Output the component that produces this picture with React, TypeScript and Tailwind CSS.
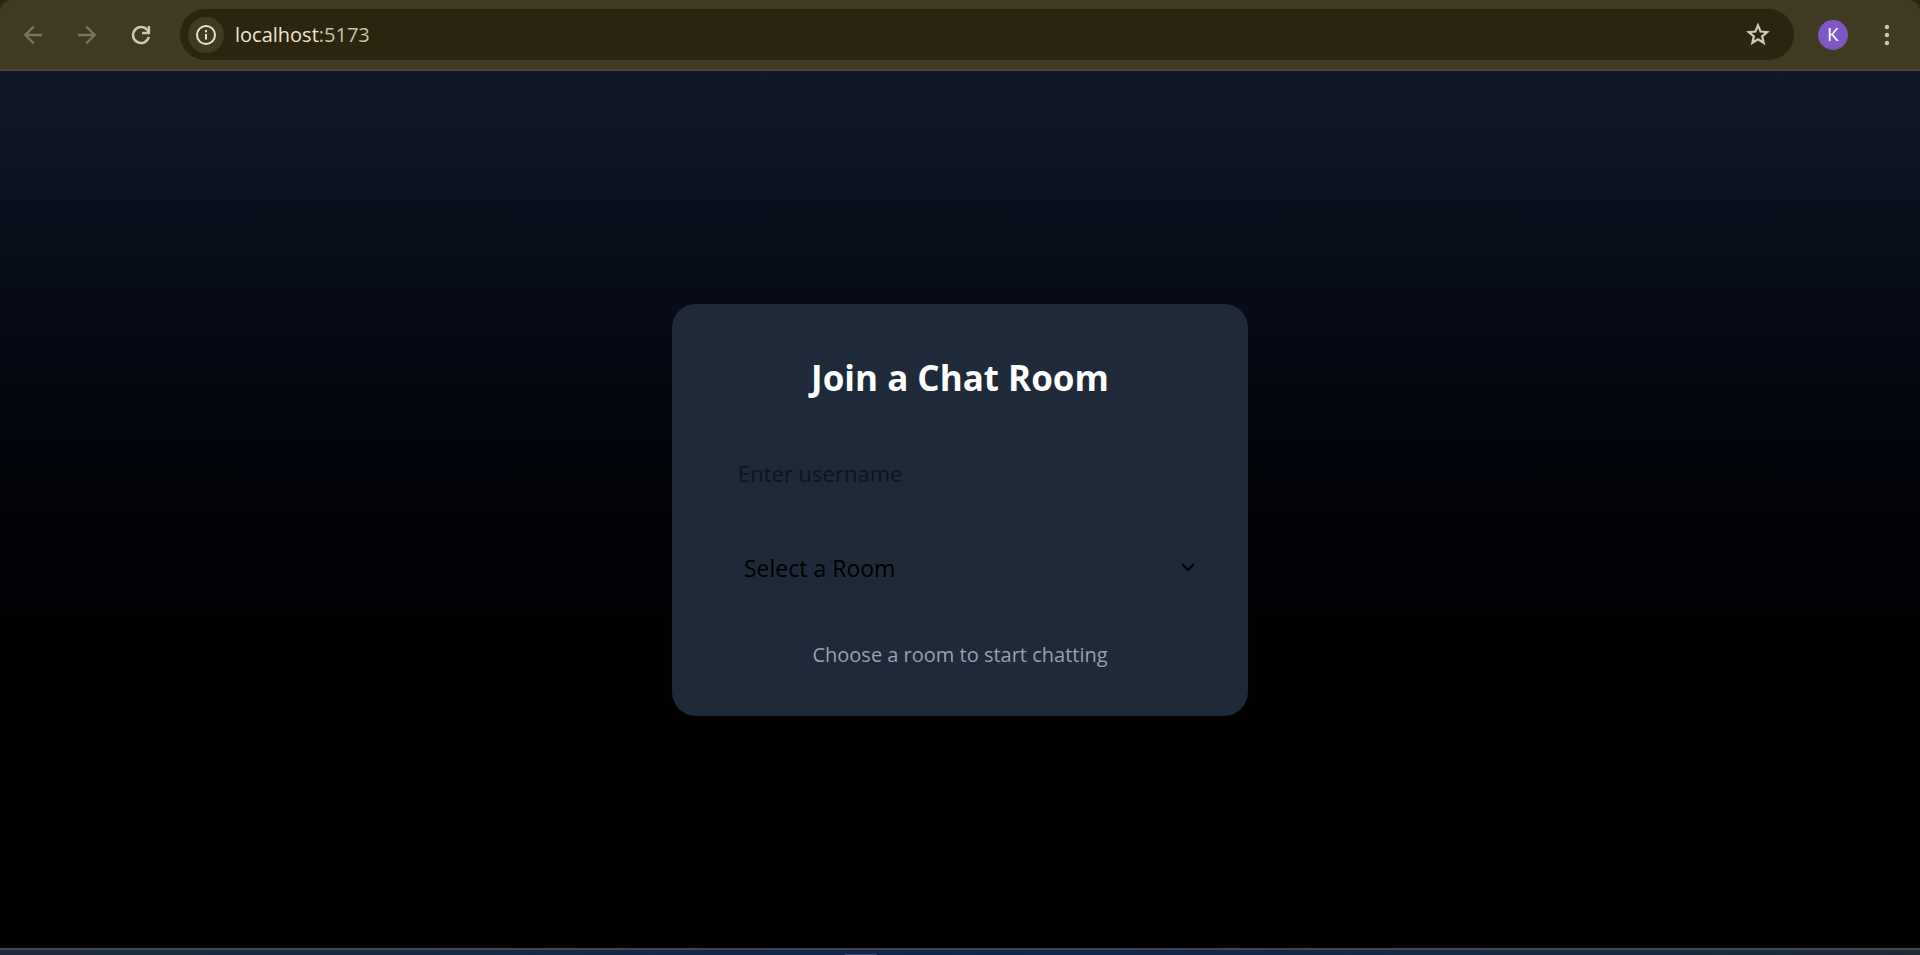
import { useState } from "react";

const rooms = ["General", "Technology", "Gaming", "Music"];

function BrowserBar() {
  return (
    <div className="bg-[#2b240f]">
      <header className="flex h-[71px] items-center rounded-t-[12px] border-b-2 border-[#4c4735] bg-[#403a23] pr-[22px] pl-[19px]">
        <nav className="flex items-center gap-[26px]" aria-label="Browser navigation">
          <button type="button" aria-label="Back" className="text-[#7b745c]">
            <svg viewBox="0 0 28 28" className="size-7" fill="none" stroke="currentColor" strokeWidth="2.4">
              <path d="M23 14H6.500M14.800 5.500L6.300 14l8.500 8.500" />
            </svg>
          </button>
          <button type="button" aria-label="Forward" className="text-[#7b745c]">
            <svg viewBox="0 0 28 28" className="size-7" fill="none" stroke="currentColor" strokeWidth="2.4">
              <path d="M5 14h16.500M13.200 5.500L21.700 14l-8.500 8.500" />
            </svg>
          </button>
          <button type="button" aria-label="Reload" className="text-[#d0c8a2]">
            <svg viewBox="0 0 28 28" className="size-7" fill="none" stroke="currentColor" strokeWidth="2.500">
              <path d="M21.800 16a8 8 0 1 1-1.700-7.200L22 11" />
              <path d="M21.900 5v6.900H15" />
            </svg>
          </button>
        </nav>
        <div className="ml-[25px] flex h-[51px] min-w-0 flex-1 items-center rounded-full bg-[#2b240f] pr-[21px] pl-2">
          <button
            type="button"
            aria-label="View site information"
            className="flex size-9 shrink-0 items-center justify-center rounded-full bg-[#403a23] text-[#e9e2cf]"
          >
            <svg viewBox="0 0 22 22" className="size-[22px]" fill="none" stroke="currentColor" strokeWidth="2">
              <circle cx="11" cy="11" r="9" />
              <path d="M11 10v5.500M11 6v2.200" />
            </svg>
          </button>
          <a href="http://localhost:5173" className="ml-[11px] flex-1 text-[20px] text-[#c9c2a6]">
            <span className="text-[#ece5d2]">localhost</span>:5173
          </a>
          <button type="button" aria-label="Bookmark this tab" className="text-[#cfc8b2]">
            <svg viewBox="0 0 24 24" className="size-[30px]" fill="none" stroke="currentColor" strokeWidth="1.800">
              <path d="M12 4.300l2.050 4.900 5.250.45-4 3.450 1.200 5.150L12 15.500l-4.500 2.750 1.200-5.150-4-3.450 5.250-.45z" />
            </svg>
          </button>
        </div>
        <button
          type="button"
          aria-label="Profile"
          className="ml-6 flex size-[30px] items-center justify-center rounded-full bg-[#7e57c2] font-[Lato,sans-serif] text-[17px] text-white"
        >
          K
        </button>
        <button type="button" aria-label="Menu" className="ml-[28px] text-[#d0c8a2]">
          <svg viewBox="0 0 22 24" className="h-6 w-[22px]" fill="currentColor">
            <circle cx="11" cy="4" r="2.200" />
            <circle cx="11" cy="12" r="2.200" />
            <circle cx="11" cy="20" r="2.200" />
          </svg>
        </button>
      </header>
    </div>
  );
}

function JoinCard() {
  const [username, setUsername] = useState("");
  const [room, setRoom] = useState("");

  return (
    <form className="flex w-full max-w-xl flex-col rounded-3xl bg-[#1e2939] px-12 pt-12 pb-[45px]">
      <h1 className="text-center text-[35px] leading-[52px] font-bold text-white">Join a Chat Room</h1>
      <input
        aria-label="Username"
        type="text"
        value={username}
        onChange={(event) => setUsername(event.target.value)}
        placeholder="Enter username"
        className="mt-[37px] h-16 rounded-xl bg-transparent px-[18px] text-[22px] text-black outline-none placeholder:text-[#0f151e]"
      />
      <div className="mt-8 grid items-center">
        <select
          aria-label="Room"
          value={room}
          onChange={(event) => setRoom(event.target.value)}
          className="col-start-1 row-start-1 h-16 w-full appearance-none rounded-xl bg-transparent px-6 text-[23px] text-black outline-none"
        >
          <option value="">Select a Room</option>
          {rooms.map((name) => (
            <option key={name}>{name}</option>
          ))}
        </select>
        <svg
          viewBox="0 0 16 16"
          className="pointer-events-none col-start-1 row-start-1 mr-1 size-4 justify-self-end"
          fill="none"
          stroke="black"
          strokeWidth="2"
        >
          <path d="M2 3l6 6 6-6" />
        </svg>
      </div>
      <p className="mt-[38px] text-center text-[20px] leading-8 text-[#99a1af]">Choose a room to start chatting</p>
    </form>
  );
}

export default function App() {
  return (
    <div className="flex min-h-screen flex-col bg-black font-['Open_Sans','Noto_Sans',sans-serif]">
      <BrowserBar />
      <main className="flex flex-1 items-center justify-center bg-linear-to-b from-[#101828] to-black px-4">
        <JoinCard />
      </main>
      <div className="flex h-[7px] items-end border-t-2 border-[#3f4854] bg-linear-to-r from-[#1f2b35] via-[#12244f] to-[#1f2b33]">
        <div className="ml-[44%] h-px w-8 bg-[#3a4a70]" />
      </div>
    </div>
  );
}
